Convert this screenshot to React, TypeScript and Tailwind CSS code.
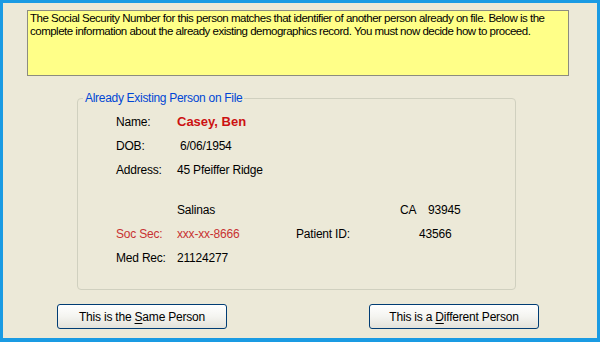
import React from "react";

const font = { fontFamily: '"Liberation Sans", Arial, sans-serif' };

function Btn({ pre, u, post }: { pre: string; u: string; post: string }) {
  return (
    <button className="w-[170px] h-[25px] rounded-[3px] border border-[#003c74] bg-gradient-to-b from-[#ffffff] via-[#f4f4f0] to-[#e3e2da] text-[12px] text-black flex items-center justify-center tracking-[-0.2px]">
      <span className="whitespace-pre">
        {pre}
        <span className="underline underline-offset-2">{u}</span>
        {post}
      </span>
    </button>
  );
}

export default function App() {
  return (
    <div
      className="w-[600px] h-[342px] bg-[#ece9d8] border-l-[3px] border-t-[3px] border-r-[3px] border-b-[4px] border-[#1a9be3] flex flex-col text-[12px] text-black"
      style={font}
    >
      <div className="ml-[24px] mt-[7px] w-[542px] h-[66px] bg-[#ffff88] border border-[#8c8c80] px-[2px] pt-[1px] leading-[13px] text-[11.5px] tracking-[-0.5px]">
        The Social Security Number for this person matches that identifier of another person already on file. Below is the complete information about the already existing demographics record. You must now decide how to proceed.
      </div>

      <div className="relative ml-[74px] mt-[22px] w-[439px] h-[192px] border border-[#d0d0bf] rounded-[4px]">
        <div className="absolute -top-[8px] left-[5px] px-[2px] bg-[#ece9d8] text-[#0046d5] leading-[15px] tracking-[-0.3px]">
          Already Existing Person on File
        </div>
        <div className="flex flex-col pl-[38px] pt-[11px] tracking-[-0.2px]">
          <div className="flex h-[24px] items-center">
            <span className="w-[61px]">Name:</span>
            <span className="font-bold text-[#cc1111] text-[13px] tracking-[0px]">Casey, Ben</span>
          </div>
          <div className="flex h-[24px] items-center">
            <span className="w-[61px]">DOB:</span>
            <span className="pl-[3px]">6/06/1954</span>
          </div>
          <div className="flex h-[24px] items-center">
            <span className="w-[61px]">Address:</span>
            <span>45 Pfeiffer Ridge</span>
          </div>
          <div className="h-[16px]" />
          <div className="flex h-[24px] items-center">
            <span className="w-[61px]" />
            <span className="w-[223px]">Salinas</span>
            <span className="w-[28px]">CA</span>
            <span>93945</span>
          </div>
          <div className="flex h-[24px] items-center text-[#c83232]">
            <span className="w-[61px]">Soc Sec:</span>
            <span className="w-[119px]">xxx-xx-8666</span>
            <span className="w-[123px] text-black">Patient ID:</span>
            <span className="text-black">43566</span>
          </div>
          <div className="flex h-[24px] items-center">
            <span className="w-[61px]">Med Rec:</span>
            <span>21124277</span>
          </div>
        </div>
      </div>

      <div className="flex mt-[14px] ml-[54px] gap-[142px]">
        <Btn pre="This is the " u="S" post="ame Person" />
        <Btn pre="This is a " u="D" post="ifferent Person" />
      </div>
    </div>
  );
}
